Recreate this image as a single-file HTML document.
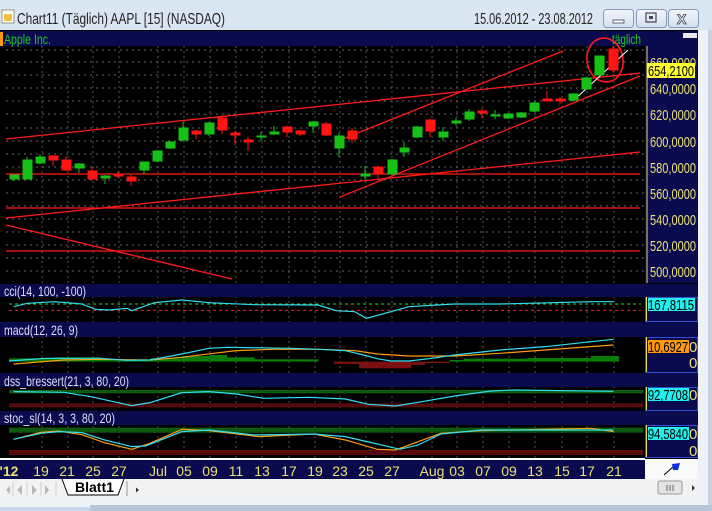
<!DOCTYPE html>
<html><head><meta charset="utf-8"><style>
html,body{margin:0;padding:0;width:712px;height:511px;overflow:hidden;background:#dfe7f1;font-family:"Liberation Sans",sans-serif}
svg{position:absolute;left:0;top:0}
</style></head><body>
<svg width="712" height="511" viewBox="0 0 712 511" xmlns="http://www.w3.org/2000/svg" font-family="Liberation Sans, sans-serif">
<defs>
<linearGradient id="tb" x1="0" y1="0" x2="0" y2="1"><stop offset="0" stop-color="#dbe6f3"/><stop offset="1" stop-color="#c9d8ea"/></linearGradient>
<linearGradient id="btn" x1="0" y1="0" x2="0" y2="1"><stop offset="0" stop-color="#f2f6fb"/><stop offset="1" stop-color="#d3dfee"/></linearGradient>
<pattern id="dg" width="2" height="2" patternUnits="userSpaceOnUse"><rect width="2" height="2" fill="#0c4d0c"/><rect width="1" height="1" fill="#1a7a1a"/></pattern>
<pattern id="dr" width="2" height="2" patternUnits="userSpaceOnUse"><rect width="2" height="2" fill="#4a0808"/><rect width="1" height="1" fill="#7a1212"/></pattern>
</defs>
<rect x="0" y="0" width="712" height="511" fill="url(#tb)"/>
<rect x="698" y="30" width="14" height="481" fill="#eef2f7"/>
<rect x="708" y="30" width="4" height="481" fill="#c8d0da"/>
<rect x="0" y="497" width="698" height="10" fill="#eef2f7"/>
<rect x="90" y="505" width="622" height="6" fill="#b7c6d9"/>
<rect x="2" y="10" width="12" height="13" fill="#fff" stroke="#997" stroke-width="1"/>
<rect x="4" y="14" width="8" height="7" fill="#f4c040"/>
<text x="17" y="24" font-size="16" fill="#222" textLength="208" lengthAdjust="spacingAndGlyphs">Chart11 (Täglich)  AAPL [15] (NASDAQ)</text>
<text x="474" y="24" font-size="16" fill="#222" textLength="119" lengthAdjust="spacingAndGlyphs">15.06.2012 - 23.08.2012</text>
<rect x="603.5" y="9.5" width="30" height="18" rx="3" fill="url(#btn)" stroke="#8a9ab0"/>
<rect x="613" y="20" width="11" height="3" fill="#fff" stroke="#445" stroke-width="0.8"/>
<rect x="636.5" y="9.5" width="30" height="18" rx="3" fill="url(#btn)" stroke="#8a9ab0"/>
<rect x="646" y="13" width="10" height="9" fill="none" stroke="#445" stroke-width="1.2"/><rect x="649" y="16" width="4" height="3" fill="#445"/>
<rect x="668.5" y="9.5" width="30" height="18" rx="3" fill="url(#btn)" stroke="#8a9ab0"/>
<text x="677" y="24" font-size="14" font-weight="bold" fill="#fff" stroke="#445" stroke-width="0.8">X</text>

<rect x="0" y="30" width="698" height="429" fill="#000"/>
<rect x="0" y="31" width="698" height="15" fill="#0a0a4e"/>
<rect x="0" y="32" width="3" height="14" fill="#ff9a00"/>
<text x="4" y="44" font-size="14" fill="#22c822" textLength="47" lengthAdjust="spacingAndGlyphs">Apple Inc.</text>
<text x="612" y="44" font-size="14" fill="#22c822" textLength="29" lengthAdjust="spacingAndGlyphs">täglich</text>
<rect x="683" y="33" width="14" height="5" fill="#e8e8e8"/>
<rect x="645" y="46" width="53" height="237" fill="#0a0a4e"/>
<line x1="647" y1="46" x2="647" y2="283" stroke="#e8d860"/>
<g fill="#e8e070" font-size="15">
<text x="650" y="68" textLength="46" lengthAdjust="spacingAndGlyphs">660,0000</text><text x="650" y="94" textLength="46" lengthAdjust="spacingAndGlyphs">640,0000</text><text x="650" y="120" textLength="46" lengthAdjust="spacingAndGlyphs">620,0000</text><text x="650" y="147" textLength="46" lengthAdjust="spacingAndGlyphs">600,0000</text><text x="650" y="173" textLength="46" lengthAdjust="spacingAndGlyphs">580,0000</text><text x="650" y="199" textLength="46" lengthAdjust="spacingAndGlyphs">560,0000</text><text x="650" y="225" textLength="46" lengthAdjust="spacingAndGlyphs">540,0000</text><text x="650" y="251" textLength="46" lengthAdjust="spacingAndGlyphs">520,0000</text><text x="650" y="277" textLength="46" lengthAdjust="spacingAndGlyphs">500,0000</text>
</g>
<rect x="647" y="63" width="48" height="15" fill="#ffff30"/>
<text x="648" y="76" font-size="15" fill="#000" textLength="46" lengthAdjust="spacingAndGlyphs">654,2100</text>
<g stroke="#666" stroke-dasharray="2,4" stroke-width="1">
<line x1="6" y1="50" x2="645" y2="50"/><line x1="6" y1="62" x2="645" y2="62"/><line x1="6" y1="75" x2="645" y2="75"/><line x1="6" y1="88" x2="645" y2="88"/><line x1="6" y1="101" x2="645" y2="101"/><line x1="6" y1="114" x2="645" y2="114"/><line x1="6" y1="128" x2="645" y2="128"/><line x1="6" y1="141" x2="645" y2="141"/><line x1="6" y1="154" x2="645" y2="154"/><line x1="6" y1="167" x2="645" y2="167"/><line x1="6" y1="180" x2="645" y2="180"/><line x1="6" y1="193" x2="645" y2="193"/><line x1="6" y1="206" x2="645" y2="206"/><line x1="6" y1="219" x2="645" y2="219"/><line x1="6" y1="232" x2="645" y2="232"/><line x1="6" y1="245" x2="645" y2="245"/><line x1="6" y1="258" x2="645" y2="258"/><line x1="6" y1="271" x2="645" y2="271"/>
</g>
<g stroke="#555" stroke-dasharray="2,3" stroke-width="1">
<line x1="42" y1="46" x2="42" y2="458"/><line x1="68" y1="46" x2="68" y2="458"/><line x1="93" y1="46" x2="93" y2="458"/><line x1="119" y1="46" x2="119" y2="458"/><line x1="158" y1="46" x2="158" y2="458"/><line x1="184" y1="46" x2="184" y2="458"/><line x1="210" y1="46" x2="210" y2="458"/><line x1="236" y1="46" x2="236" y2="458"/><line x1="262" y1="46" x2="262" y2="458"/><line x1="289" y1="46" x2="289" y2="458"/><line x1="315" y1="46" x2="315" y2="458"/><line x1="340" y1="46" x2="340" y2="458"/><line x1="366" y1="46" x2="366" y2="458"/><line x1="392" y1="46" x2="392" y2="458"/><line x1="432" y1="46" x2="432" y2="458"/><line x1="457" y1="46" x2="457" y2="458"/><line x1="483" y1="46" x2="483" y2="458"/><line x1="509" y1="46" x2="509" y2="458"/><line x1="535" y1="46" x2="535" y2="458"/><line x1="562" y1="46" x2="562" y2="458"/><line x1="587" y1="46" x2="587" y2="458"/><line x1="614" y1="46" x2="614" y2="458"/>
</g>
<g stroke="#ff1a1a" stroke-width="1.3" fill="none">
<line x1="6" y1="139" x2="640" y2="73"/>
<line x1="6" y1="218" x2="640" y2="152"/>
<line x1="6" y1="174" x2="640" y2="174"/>
<line x1="6" y1="208" x2="640" y2="208"/>
<line x1="6" y1="251" x2="640" y2="251"/>
<line x1="6" y1="225" x2="232" y2="279"/>
<line x1="340" y1="197" x2="640" y2="76"/>
<line x1="340" y1="140" x2="563" y2="51"/>
<ellipse cx="605" cy="60" rx="18" ry="22" stroke-width="1.6" transform="rotate(-10 605 60)"/>
</g>
<line x1="573" y1="101" x2="628" y2="50" stroke="#fff" stroke-width="1"/>
<g>
<g fill="#16c016" stroke="#16c016">
<line x1="14" y1="175" x2="14" y2="181"/><rect x="10" y="175" width="9" height="4"/>
<line x1="27" y1="157" x2="27" y2="179"/><rect x="23" y="160" width="9" height="19"/>
<line x1="40" y1="154" x2="40" y2="164"/><rect x="36" y="157" width="9" height="6"/>
<line x1="79" y1="163" x2="79" y2="173"/><rect x="75" y="164" width="9" height="4"/>
<line x1="105" y1="175" x2="105" y2="184"/><rect x="101" y="176" width="9" height="2"/>
<line x1="144" y1="162" x2="144" y2="174"/><rect x="140" y="162" width="9" height="8"/>
<line x1="157" y1="150" x2="157" y2="162"/><rect x="153" y="151" width="9" height="10"/>
<line x1="170" y1="141" x2="170" y2="149"/><rect x="166" y="142" width="9" height="6"/>
<line x1="183" y1="122" x2="183" y2="141"/><rect x="179" y="128" width="9" height="12"/>
<line x1="209" y1="122" x2="209" y2="136"/><rect x="205" y="123" width="9" height="11"/>
<line x1="261" y1="132" x2="261" y2="141"/><rect x="257" y="136" width="9" height="1"/>
<line x1="274" y1="126" x2="274" y2="135"/><rect x="270" y="132" width="9" height="2"/>
<line x1="313" y1="121" x2="313" y2="133"/><rect x="309" y="122" width="9" height="4"/>
<line x1="339" y1="133" x2="339" y2="157"/><rect x="335" y="136" width="9" height="12"/>
<line x1="365" y1="166" x2="365" y2="180"/><rect x="361" y="174" width="9" height="2"/>
<line x1="392" y1="159" x2="392" y2="175"/><rect x="388" y="160" width="9" height="14"/>
<line x1="404" y1="142" x2="404" y2="157"/><rect x="400" y="148" width="9" height="4"/>
<line x1="417" y1="126" x2="417" y2="138"/><rect x="413" y="127" width="9" height="10"/>
<line x1="443" y1="127" x2="443" y2="141"/><rect x="439" y="132" width="9" height="5"/>
<line x1="456" y1="118" x2="456" y2="126"/><rect x="452" y="121" width="9" height="2"/>
<line x1="469" y1="109" x2="469" y2="121"/><rect x="465" y="112" width="9" height="7"/>
<line x1="495" y1="110" x2="495" y2="119"/><rect x="491" y="115" width="9" height="1"/>
<line x1="508" y1="113" x2="508" y2="119"/><rect x="504" y="114" width="9" height="4"/>
<line x1="521" y1="112" x2="521" y2="118"/><rect x="517" y="113" width="9" height="4"/>
<line x1="534" y1="102" x2="534" y2="112"/><rect x="530" y="103" width="9" height="8"/>
<line x1="573" y1="93" x2="573" y2="101"/><rect x="569" y="94" width="9" height="6"/>
<line x1="586" y1="77" x2="586" y2="90"/><rect x="582" y="78" width="9" height="11"/>
<rect x="595" y="56" width="9" height="19"/>
</g>
<g fill="#ff1414" stroke="#ff1414">
<line x1="53" y1="155" x2="53" y2="166"/><rect x="49" y="156" width="9" height="4"/>
<line x1="66" y1="156" x2="66" y2="171"/><rect x="62" y="160" width="9" height="10"/>
<line x1="92" y1="167" x2="92" y2="179"/><rect x="88" y="171" width="9" height="8"/>
<line x1="118" y1="171" x2="118" y2="178"/><rect x="114" y="174" width="9" height="2"/>
<line x1="131" y1="175" x2="131" y2="186"/><rect x="127" y="177" width="9" height="4"/>
<line x1="196" y1="130" x2="196" y2="139"/><rect x="192" y="131" width="9" height="3"/>
<line x1="222" y1="115" x2="222" y2="134"/><rect x="218" y="118" width="9" height="12"/>
<line x1="235" y1="131" x2="235" y2="145"/><rect x="231" y="133" width="9" height="2"/>
<line x1="248" y1="137" x2="248" y2="151"/><rect x="244" y="140" width="9" height="2"/>
<line x1="287" y1="126" x2="287" y2="137"/><rect x="283" y="127" width="9" height="5"/>
<line x1="300" y1="130" x2="300" y2="136"/><rect x="296" y="131" width="9" height="3"/>
<line x1="326" y1="122" x2="326" y2="136"/><rect x="322" y="124" width="9" height="11"/>
<line x1="352" y1="128" x2="352" y2="143"/><rect x="348" y="131" width="9" height="8"/>
<line x1="378" y1="166" x2="378" y2="179"/><rect x="374" y="167" width="9" height="7"/>
<line x1="430" y1="119" x2="430" y2="137"/><rect x="426" y="120" width="9" height="11"/>
<line x1="482" y1="108" x2="482" y2="118"/><rect x="478" y="111" width="9" height="2"/>
<line x1="547" y1="91" x2="547" y2="101"/><rect x="543" y="99" width="9" height="2"/>
<line x1="560" y1="97" x2="560" y2="104"/><rect x="556" y="99" width="9" height="2"/>
<line x1="613" y1="46" x2="613" y2="72"/><rect x="609" y="49" width="9" height="21"/>
</g>
</g>

<g fill="#0a0a4e">
<rect x="0" y="284" width="698" height="13"/>
<rect x="0" y="322" width="698" height="15"/>
<rect x="0" y="373" width="698" height="14"/>
<rect x="0" y="411" width="698" height="14"/>
<rect x="645" y="297" width="53" height="25"/>
<rect x="645" y="337" width="53" height="36"/>
<rect x="645" y="387" width="53" height="24"/>
<rect x="645" y="425" width="53" height="33"/>
</g>
<g stroke="#3050d0" fill="none">
<rect x="645.5" y="297.5" width="52" height="24"/>
<rect x="645.5" y="337.5" width="52" height="35"/>
<rect x="645.5" y="387.5" width="52" height="23"/>
<rect x="645.5" y="425.5" width="52" height="32"/>
</g>
<g stroke="#e8d860"><line x1="646.5" y1="297" x2="646.5" y2="321"/><line x1="646.5" y1="337" x2="646.5" y2="372"/><line x1="646.5" y1="387" x2="646.5" y2="410"/><line x1="646.5" y1="425" x2="646.5" y2="457"/></g>
<g font-size="14" fill="#dcdcf4">
<text x="4" y="296" textLength="82" lengthAdjust="spacingAndGlyphs">cci(14, 100, -100)</text>
<text x="4" y="335" textLength="74" lengthAdjust="spacingAndGlyphs">macd(12, 26, 9)</text>
<text x="4" y="386" textLength="125" lengthAdjust="spacingAndGlyphs">dss_bressert(21, 3, 80, 20)</text>
<text x="4" y="423" textLength="111" lengthAdjust="spacingAndGlyphs">stoc_sl(14, 3, 3, 80, 20)</text>
</g>
<g font-size="15">
<rect x="648" y="298" width="47" height="13" fill="#20f0f0"/><text x="648" y="310" fill="#000" textLength="46" lengthAdjust="spacingAndGlyphs">167,8115</text>
<rect x="648" y="340" width="41" height="13" fill="#ff9a10"/><text x="648" y="352" fill="#000" textLength="40" lengthAdjust="spacingAndGlyphs">10,6927</text><text x="689" y="352" fill="#e8e070">0</text><text x="689" y="368" fill="#e8e070">0</text>
<rect x="648" y="388" width="41" height="13" fill="#20f0f0"/><text x="648" y="400" fill="#000" textLength="40" lengthAdjust="spacingAndGlyphs">92,7708</text><text x="689" y="400" fill="#e8e070">0</text>
<rect x="648" y="427" width="41" height="13" fill="#20f0f0"/><text x="648" y="439" fill="#000" textLength="40" lengthAdjust="spacingAndGlyphs">94,5840</text><text x="689" y="439" fill="#e8e070">0</text><text x="689" y="456" fill="#e8e070">0</text>
</g>

<g transform="translate(0,280) scale(0.4545,0.3333)">
<line x1="20" y1="72" x2="1410" y2="72" stroke="#30d030" stroke-dasharray="3,3" stroke-width="1" vector-effect="non-scaling-stroke"/>
<line x1="20" y1="91" x2="1410" y2="91" stroke="#ff2020" stroke-dasharray="3,3" stroke-width="1" vector-effect="non-scaling-stroke"/>
<polyline fill="none" stroke="#30e0f0" vector-effect="non-scaling-stroke" stroke-width="1.2" points="30,80 60,70 120,65 180,72 210,88 240,90 280,85 290,92 340,68 400,60 460,68 560,74 700,75 740,92 780,95 806,115 860,95 900,80 1000,72 1100,72 1300,65 1350,65"/>
<g fill="#0a7a0a">
<rect x="20" y="235" width="100" height="10"/><rect x="120" y="232" width="100" height="13"/><rect x="220" y="240" width="110" height="5"/><rect x="330" y="235" width="70" height="10"/><rect x="400" y="228" width="60" height="17"/><rect x="460" y="225" width="40" height="20"/><rect x="500" y="232" width="60" height="13"/><rect x="560" y="238" width="140" height="7"/>
<rect x="990" y="240" width="30" height="5"/><rect x="1020" y="236" width="140" height="9"/><rect x="1160" y="234" width="140" height="11"/><rect x="1300" y="228" width="62" height="17"/>
</g>
<g fill="#7a1010"><rect x="735" y="245" width="55" height="7"/><rect x="790" y="245" width="115" height="20"/><rect x="905" y="245" width="30" height="10"/><rect x="935" y="245" width="55" height="4"/></g>
<polyline fill="none" stroke="#ff9a10" vector-effect="non-scaling-stroke" stroke-width="1.2" points="30,252 140,240 220,238 330,240 400,232 470,220 520,212 600,208 700,208 780,212 830,222 900,228 1000,228 1100,220 1200,210 1300,200 1350,195"/>
<polyline fill="none" stroke="#30e0f0" vector-effect="non-scaling-stroke" stroke-width="1.2" points="20,243 100,235 220,235 280,241 330,240 400,222 460,205 500,202 640,205 700,208 760,212 800,225 830,236 860,243 900,243 950,235 1000,225 1100,210 1200,200 1300,185 1350,178"/>
<rect x="20" y="330" width="1395" height="10" fill="url(#dg)"/>
<rect x="20" y="370" width="1395" height="12" fill="url(#dr)"/>
<polyline fill="none" stroke="#30e0f0" vector-effect="non-scaling-stroke" stroke-width="1.2" points="30,335 140,337 200,350 240,362 290,377 330,368 400,338 460,335 520,342 580,355 680,352 760,357 810,373 870,378 920,367 1000,348 1080,333 1130,330 1350,334"/>
<rect x="20" y="443" width="1395" height="15" fill="url(#dg)"/>
<rect x="20" y="510" width="1395" height="15" fill="url(#dr)"/>
<polyline fill="none" stroke="#ff9a10" vector-effect="non-scaling-stroke" stroke-width="1.2" points="30,478 90,457 130,453 180,464 230,488 290,508 330,490 400,448 460,452 570,470 690,462 760,480 830,508 870,510 920,485 970,460 1060,452 1300,445 1350,455"/>
<polyline fill="none" stroke="#30e0f0" vector-effect="non-scaling-stroke" stroke-width="1.2" points="30,478 90,460 130,455 180,458 230,480 290,500 320,498 400,455 460,450 560,465 690,462 760,470 830,492 880,508 920,495 970,462 1060,450 1350,450"/>
</g>

<rect x="0" y="458" width="645" height="2" fill="#fff"/>
<rect x="0" y="460" width="645" height="19" fill="#0a0a4e"/>
<g font-size="14" fill="#e8e070" text-anchor="middle">
<text x="9" y="476" font-weight="bold">'12</text><text x="41" y="476">19</text><text x="67" y="476">21</text><text x="93" y="476">25</text><text x="119" y="476">27</text><text x="158" y="476">Jul</text><text x="184" y="476">05</text><text x="210" y="476">09</text><text x="236" y="476">11</text><text x="262" y="476">13</text><text x="289" y="476">17</text><text x="315" y="476">19</text><text x="340" y="476">23</text><text x="366" y="476">25</text><text x="392" y="476">27</text><text x="432" y="476">Aug</text><text x="457" y="476">03</text><text x="483" y="476">07</text><text x="509" y="476">09</text><text x="535" y="476">13</text><text x="562" y="476">15</text><text x="587" y="476">17</text><text x="614" y="476">21</text>
</g>
<rect x="645" y="459" width="53" height="20" fill="#fafafa"/>
<line x1="664" y1="475" x2="674" y2="466" stroke="#000"/>
<path d="M672 464 L680 463 L678 470 L673 470 Z" fill="#1030e0"/>
<rect x="0" y="479" width="698" height="18" fill="#f2f2f2"/>
<g fill="#b8b8b8"><path d="M3 486 v8 M6 490 l4 -4 v8z"/><path d="M17 490 l5 -5 v10z"/><path d="M32 485 l5 5 -5 5z"/><path d="M45 485 l4 5 -4 5z M51 486 v8"/></g>
<g stroke="#d0d0d0"><line x1="13" y1="482" x2="13" y2="496"/><line x1="27" y1="482" x2="27" y2="496"/><line x1="41" y1="482" x2="41" y2="496"/><line x1="56" y1="482" x2="56" y2="496"/></g>
<path d="M62 479 L68 495 L118 495 L124 479" fill="#fff" stroke="#000"/>
<text x="75" y="492" font-size="14" font-weight="bold" fill="#000">Blatt1</text>
<line x1="127" y1="481" x2="127" y2="496" stroke="#999"/>
<path d="M139 490 l-3 -2.5 v5z" fill="#333"/>
<rect x="658" y="481" width="24" height="13" rx="2" fill="#e4e4e4" stroke="#999"/>
<g stroke="#666"><line x1="667" y1="485" x2="667" y2="491"/><line x1="670" y1="485" x2="670" y2="491"/><line x1="673" y1="485" x2="673" y2="491"/></g>
<path d="M692 485 l3 3 -3 3z" fill="#333"/>
</svg>
</body></html>
